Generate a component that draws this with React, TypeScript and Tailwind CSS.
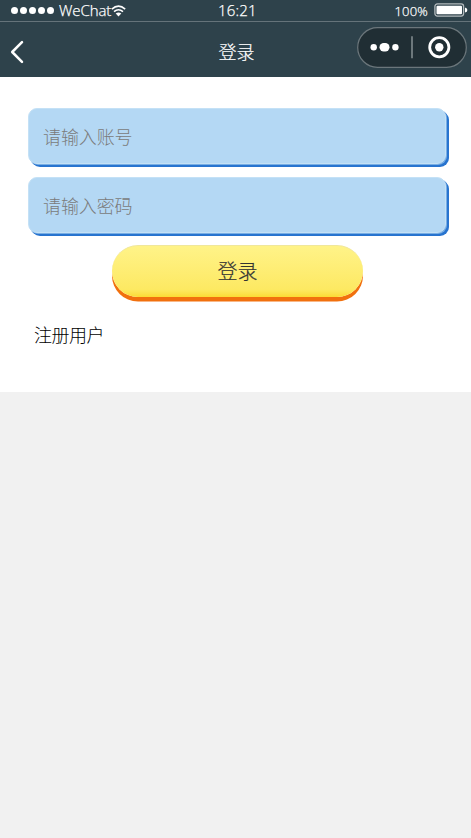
import React from "react";

function StatusBar() {
  return (
    <div className="relative flex h-[22px] items-center justify-between border-b border-[#65737a] pl-[11px] pr-[3px] font-['Open_Sans','Noto_Sans',sans-serif] font-light">
      <div className="flex items-center">
        <div className="flex gap-[2px]">
          {[0, 1, 2, 3, 4].map((i) => (
            <span key={i} className="h-[7px] w-[7px] rounded-full bg-white" />
          ))}
        </div>
        <span className="mb-[2px] ml-[5px] w-[52px] whitespace-nowrap text-[15px] leading-[20px] tracking-[-0.1px] [-webkit-text-stroke:0.25px_white]">WeChat</span>
        <svg className="mt-px" width="15" height="12" viewBox="0 0 15 12" fill="none" stroke="white" strokeWidth="1.6">
          <path d="M.8 4.2Q7.5-1.8 14.2 4.2M3 6.7Q7.5 2.8 12 6.7" />
          <path d="M4.7 8.5Q7.5 6.4 10.3 8.5L7.5 11.5Z" fill="white" stroke="none" />
        </svg>
      </div>
      <span className="absolute left-[218px] top-0 text-[15px] leading-[20px] tracking-[0.2px] [-webkit-text-stroke:0.25px_white]">16:21</span>
      <div className="flex items-center">
        <span className="mr-[6px] text-[13px] leading-[20px] tracking-[0.2px] [-webkit-text-stroke:0.25px_white]">100%</span>
        <svg className="mb-px" width="34" height="14" viewBox="0 0 34 14">
          <rect x=".9" y=".9" width="28.7" height="12.2" rx="2.5" fill="none" stroke="#b3babd" strokeWidth="1.3" />
          <rect x="2.5" y="2.7" width="25.5" height="8.6" rx="1" fill="white" />
          <path d="M31 4.5Q33.4 5 33.4 7T31 9.5Z" fill="white" />
        </svg>
      </div>
    </div>
  );
}

function Field({ placeholder, label }: { placeholder: string; label: string }) {
  return (
    <input
      aria-label={label}
      placeholder={placeholder}
      className="block h-[56px] w-[418px] rounded-[9px] border border-[#c4e1f6] bg-[#b4d8f4] px-[14px] text-[18px] font-light tracking-[-0.1px] text-[#555] shadow-[1px_1px_0_#78aee4,2px_2px_0_#2874cf,3px_3px_0_#2874cf] outline-none placeholder:text-[#7b7b7b]"
    />
  );
}

export default function App() {
  return (
    <div className="h-[838px] w-[471px] overflow-hidden bg-[#f1f1f1] font-['Noto_Sans_CJK_SC',sans-serif]">
      <header className="h-[77px] bg-[#2e424b] text-white">
        <StatusBar />
        <div className="grid h-[55px] grid-cols-[1fr_110px_1fr] items-center pl-[10px] pr-[4px]">
          <button aria-label="返回" className="mt-[4px] w-[14px]">
            <svg className="block" width="14" height="24" viewBox="0 0 14 24" fill="none" stroke="white" strokeWidth="2.5" strokeLinecap="round" strokeLinejoin="round">
              <path d="M12 2.2L2.2 12L12 21.8" />
            </svg>
          </button>
          <h1 className="pr-[4px] pt-[2px] text-center text-[18px] font-light leading-[26px] [-webkit-text-stroke:0.2px_white]">登录</h1>
          <svg className="mb-[5px] justify-self-end" width="110" height="41" viewBox="0 0 110 41">
            <rect x=".7" y=".7" width="108.6" height="39.6" rx="19.8" fill="#202e34" stroke="#6b767b" strokeWidth="1.2" />
            <g fill="white">
              <circle cx="16.7" cy="20.3" r="3.2" />
              <rect x="22.5" y="16.1" width="10" height="8.4" rx="4.2" />
              <circle cx="38.4" cy="20.3" r="3.2" />
              <circle cx="82.3" cy="20.3" r="4.2" />
            </g>
            <path d="M55 9.3V31.3" stroke="#7b8589" strokeWidth="1.7" />
            <circle cx="82.3" cy="20.3" r="9.6" fill="none" stroke="white" strokeWidth="2.8" />
          </svg>
        </div>
      </header>
      <main className="h-[315px] bg-white px-[28px] pt-[31px]">
        <form className="flex flex-col gap-[13px]" onSubmit={(e) => e.preventDefault()}>
          <Field label="账号" placeholder="请输入账号" />
          <Field label="密码" placeholder="请输入密码" />
          <button className="-mt-px ml-[84px] h-[52px] w-[251px] rounded-[26px] border-t border-[#f0e79b] bg-linear-to-b from-[#fff388] via-[#fde962] via-85% to-[#fcda32] pb-[2px] text-[20px] font-light text-[#333] shadow-[0_4.5px_0_#f1700e] [-webkit-text-stroke:0.2px_#333]">
            登录
          </button>
        </form>
        <a href="#" className="ml-[6px] mt-[24px] inline-block text-[18px] font-light leading-[26px] tracking-[-0.5px] text-black">注册用户</a>
      </main>
    </div>
  );
}
